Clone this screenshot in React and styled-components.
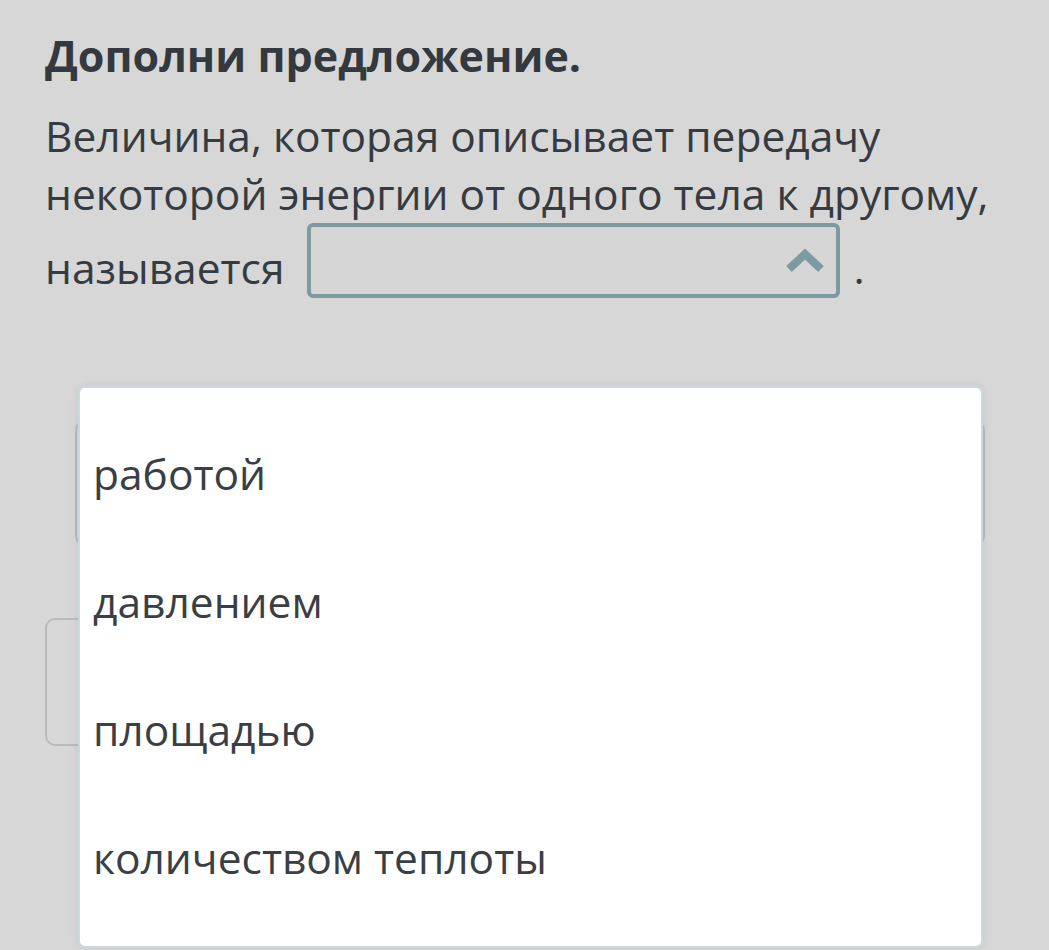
import React from "react";
import styled, {createGlobalStyle} from "styled-components";

const GlobalStyle = createGlobalStyle`
  html, body {
    margin: 0;
    padding: 0;
    background: #d7d7d7;
  }
  body {
    font-family: 'Open Sans', 'Noto Sans', sans-serif;
    color: #363b42;
  }
`;

const Page = styled.div`
  position: relative;
  width: 1049px;
  height: 950px;
  overflow: hidden;
  background: #d7d7d7;
  box-sizing: border-box;
  padding: 27px 0 0 45px;
`;

const Title = styled.h1`
  margin: 0;
  font-size: 43px;
  font-weight: 700;
  line-height: 58px;
  color: #343940;
`;

const Question = styled.p`
  margin: 22px 0 0;
  font-size: 42.5px;
  line-height: 58px;
  width: 980px;
`;

const SelectBox = styled.span`
  display: inline-block;
  overflow: hidden;
  box-sizing: border-box;
  width: 533px;
  height: 75px;
  margin: 0 13px 0 23px;
  padding: 20px 10px 0 0;
  vertical-align: -14px;
  text-align: right;
  line-height: 0;
  border: 4px solid #7c9aa0;
  border-radius: 6px;
  background: #d6d6d6;
`;

const Answers = styled.div`
  display: flex;
  flex-direction: column;
  gap: 72px;
  margin-top: 122px;
`;

const AnswerSlot = styled.div`
  box-sizing: border-box;
  height: ${p => p.$h}px;
  width: ${p => p.$w}px;
  margin-left: ${p => p.$left}px;
  border: 2px solid #b9bbbd;
  border-radius: 10px;
`;

const Menu = styled.ul`
  position: absolute;
  top: 386px;
  left: 78px;
  width: 905px;
  box-sizing: border-box;
  margin: 0;
  padding: 21px 0 25px;
  list-style: none;
  background: #ffffff;
  border: 2px solid #c9dadc;
  border-radius: 7px;
  box-shadow: 0 0 10px rgba(0, 0, 0, 0.08);
`;

const Option = styled.li`
  height: 128px;
  display: flex;
  align-items: center;
  padding-left: 13px;
  font-size: 42.5px;
  color: #3a3f45;
`;

const Chevron = () => (
  <svg width="42" height="28" viewBox="0 0 42 28">
    <polyline
      points="5,22 21,7 37,22"
      fill="none"
      stroke="#7c9aa0"
      strokeWidth="8"
      strokeLinejoin="miter"
    />
  </svg>
);

const options = ["работой", "давлением", "площадью", "количеством теплоты"];

export default function App() {
  return (
    <Page>
      <GlobalStyle/>
      <Title>Дополни предложение.</Title>
      <Question>
        Величина, которая описывает передачу некоторой энергии от одного тела к другому,
        называется
        <SelectBox><Chevron/></SelectBox>.
      </Question>
      <Answers>
        <AnswerSlot $left={30} $w={910} $h={126}/>
        <AnswerSlot $left={0} $w={300} $h={128}/>
      </Answers>
      <Menu>
        {options.map(o => <Option key={o}>{o}</Option>)}
      </Menu>
    </Page>
  );
}
